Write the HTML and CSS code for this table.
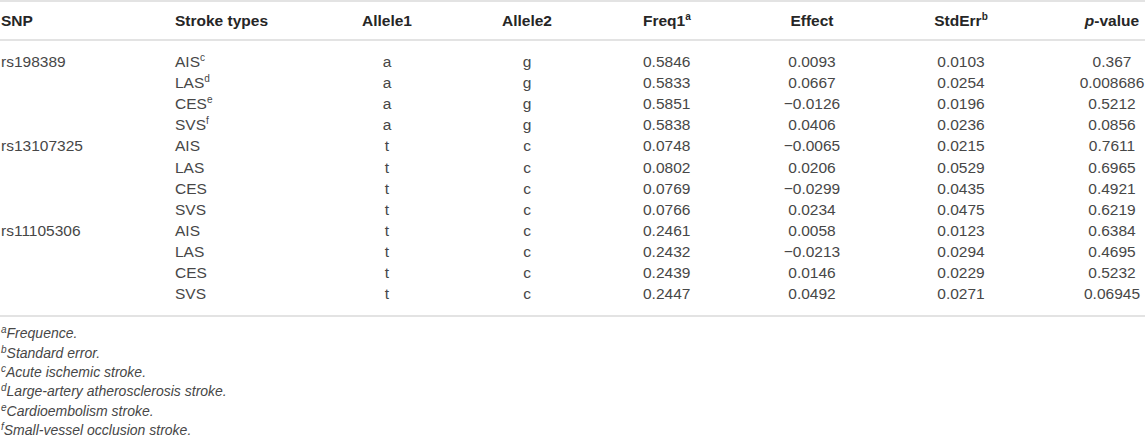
FILE: index.html
```html
<!DOCTYPE html>
<html>
<head>
<meta charset="utf-8">
<link rel="stylesheet" href="styles.css">
</head>
<body>
<table class="data">
  <colgroup>
    <col class="c1"><col class="c2"><col class="c3"><col class="c4"><col class="c5"><col class="c6"><col class="c7"><col class="c8">
  </colgroup>
  <thead>
    <tr>
      <th class="l">SNP</th>
      <th class="l">Stroke types</th>
      <th class="c">Allele1</th>
      <th class="c">Allele2</th>
      <th class="f">Freq1<sup>a</sup></th>
      <th class="c">Effect</th>
      <th class="c">StdErr<sup>b</sup></th>
      <th class="p"><i>p</i>-value</th>
    </tr>
  </thead>
  <tbody>
    <tr class="first"><td class="l">rs198389</td><td class="l">AIS<sup>c</sup></td><td class="c">a</td><td class="c">g</td><td class="f">0.5846</td><td class="c">0.0093</td><td class="c">0.0103</td><td class="p">0.367</td></tr>
    <tr><td class="l"></td><td class="l">LAS<sup>d</sup></td><td class="c">a</td><td class="c">g</td><td class="f">0.5833</td><td class="c">0.0667</td><td class="c">0.0254</td><td class="p">0.008686</td></tr>
    <tr><td class="l"></td><td class="l">CES<sup>e</sup></td><td class="c">a</td><td class="c">g</td><td class="f">0.5851</td><td class="c">&minus;0.0126</td><td class="c">0.0196</td><td class="p">0.5212</td></tr>
    <tr><td class="l"></td><td class="l">SVS<sup>f</sup></td><td class="c">a</td><td class="c">g</td><td class="f">0.5838</td><td class="c">0.0406</td><td class="c">0.0236</td><td class="p">0.0856</td></tr>
    <tr><td class="l">rs13107325</td><td class="l">AIS</td><td class="c">t</td><td class="c">c</td><td class="f">0.0748</td><td class="c">&minus;0.0065</td><td class="c">0.0215</td><td class="p">0.7611</td></tr>
    <tr><td class="l"></td><td class="l">LAS</td><td class="c">t</td><td class="c">c</td><td class="f">0.0802</td><td class="c">0.0206</td><td class="c">0.0529</td><td class="p">0.6965</td></tr>
    <tr><td class="l"></td><td class="l">CES</td><td class="c">t</td><td class="c">c</td><td class="f">0.0769</td><td class="c">&minus;0.0299</td><td class="c">0.0435</td><td class="p">0.4921</td></tr>
    <tr><td class="l"></td><td class="l">SVS</td><td class="c">t</td><td class="c">c</td><td class="f">0.0766</td><td class="c">0.0234</td><td class="c">0.0475</td><td class="p">0.6219</td></tr>
    <tr><td class="l">rs11105306</td><td class="l">AIS</td><td class="c">t</td><td class="c">c</td><td class="f">0.2461</td><td class="c">0.0058</td><td class="c">0.0123</td><td class="p">0.6384</td></tr>
    <tr><td class="l"></td><td class="l">LAS</td><td class="c">t</td><td class="c">c</td><td class="f">0.2432</td><td class="c">&minus;0.0213</td><td class="c">0.0294</td><td class="p">0.4695</td></tr>
    <tr><td class="l"></td><td class="l">CES</td><td class="c">t</td><td class="c">c</td><td class="f">0.2439</td><td class="c">0.0146</td><td class="c">0.0229</td><td class="p">0.5232</td></tr>
    <tr class="last"><td class="l"></td><td class="l">SVS</td><td class="c">t</td><td class="c">c</td><td class="f">0.2447</td><td class="c">0.0492</td><td class="c">0.0271</td><td class="p">0.06945</td></tr>
  </tbody>
</table>
<div class="notes">
  <p><sup>a</sup>Frequence.</p>
  <p><sup>b</sup>Standard error.</p>
  <p><sup>c</sup>Acute ischemic stroke.</p>
  <p><sup>d</sup>Large-artery atherosclerosis stroke.</p>
  <p><sup>e</sup>Cardioembolism stroke.</p>
  <p><sup>f</sup>Small-vessel occlusion stroke.</p>
</div>
</body>
</html>
```
FILE: styles.css
```css
html, body {
  margin: 0;
  padding: 0;
  background: #fff;
}
body {
  font-family: "Liberation Sans", Arial, sans-serif;
  color: #474747;
  width: 1145px;
}
.data {
  width: 1145px;
  border-collapse: collapse;
  table-layout: fixed;
  font-size: 15.5px;
  border-top: 2px solid #e3e3e3;
  border-bottom: 2px solid #e3e3e3;
}
.c1 { width: 174px; }
.c2 { width: 146px; }
.c3 { width: 134px; }
.c4 { width: 146px; }
.c5 { width: 143px; }
.c6 { width: 138px; }
.c7 { width: 160px; }
.c8 { width: 104px; }
th {
  font-weight: bold;
  color: #262626;
  height: 37px;
  padding: 0;
  border-bottom: 2px solid #e3e3e3;
  vertical-align: middle;
}
td {
  padding: 0;
  height: 21.1px;
  line-height: 21px;
  vertical-align: middle;
  white-space: nowrap;
}
.first td { padding-top: 10px; }
.last td { padding-bottom: 11px; }
.l { text-align: left; padding-left: 1px; }
.c { text-align: center; }
.f { text-align: left; padding-left: 43px; }
.p { text-align: center; padding-left: 38px; }
sup {
  font-size: 10px;
  line-height: 0;
  vertical-align: 0;
  position: relative;
  top: -6px;
}
.notes {
  padding-top: 7px;
  font-size: 14px;
  font-style: italic;
  color: #474747;
}
.notes p {
  margin: 0;
  height: 19.4px;
  line-height: 19.4px;
  padding-left: 1px;
}
.notes sup {
  font-size: 10px;
  top: -5px;
}
```
